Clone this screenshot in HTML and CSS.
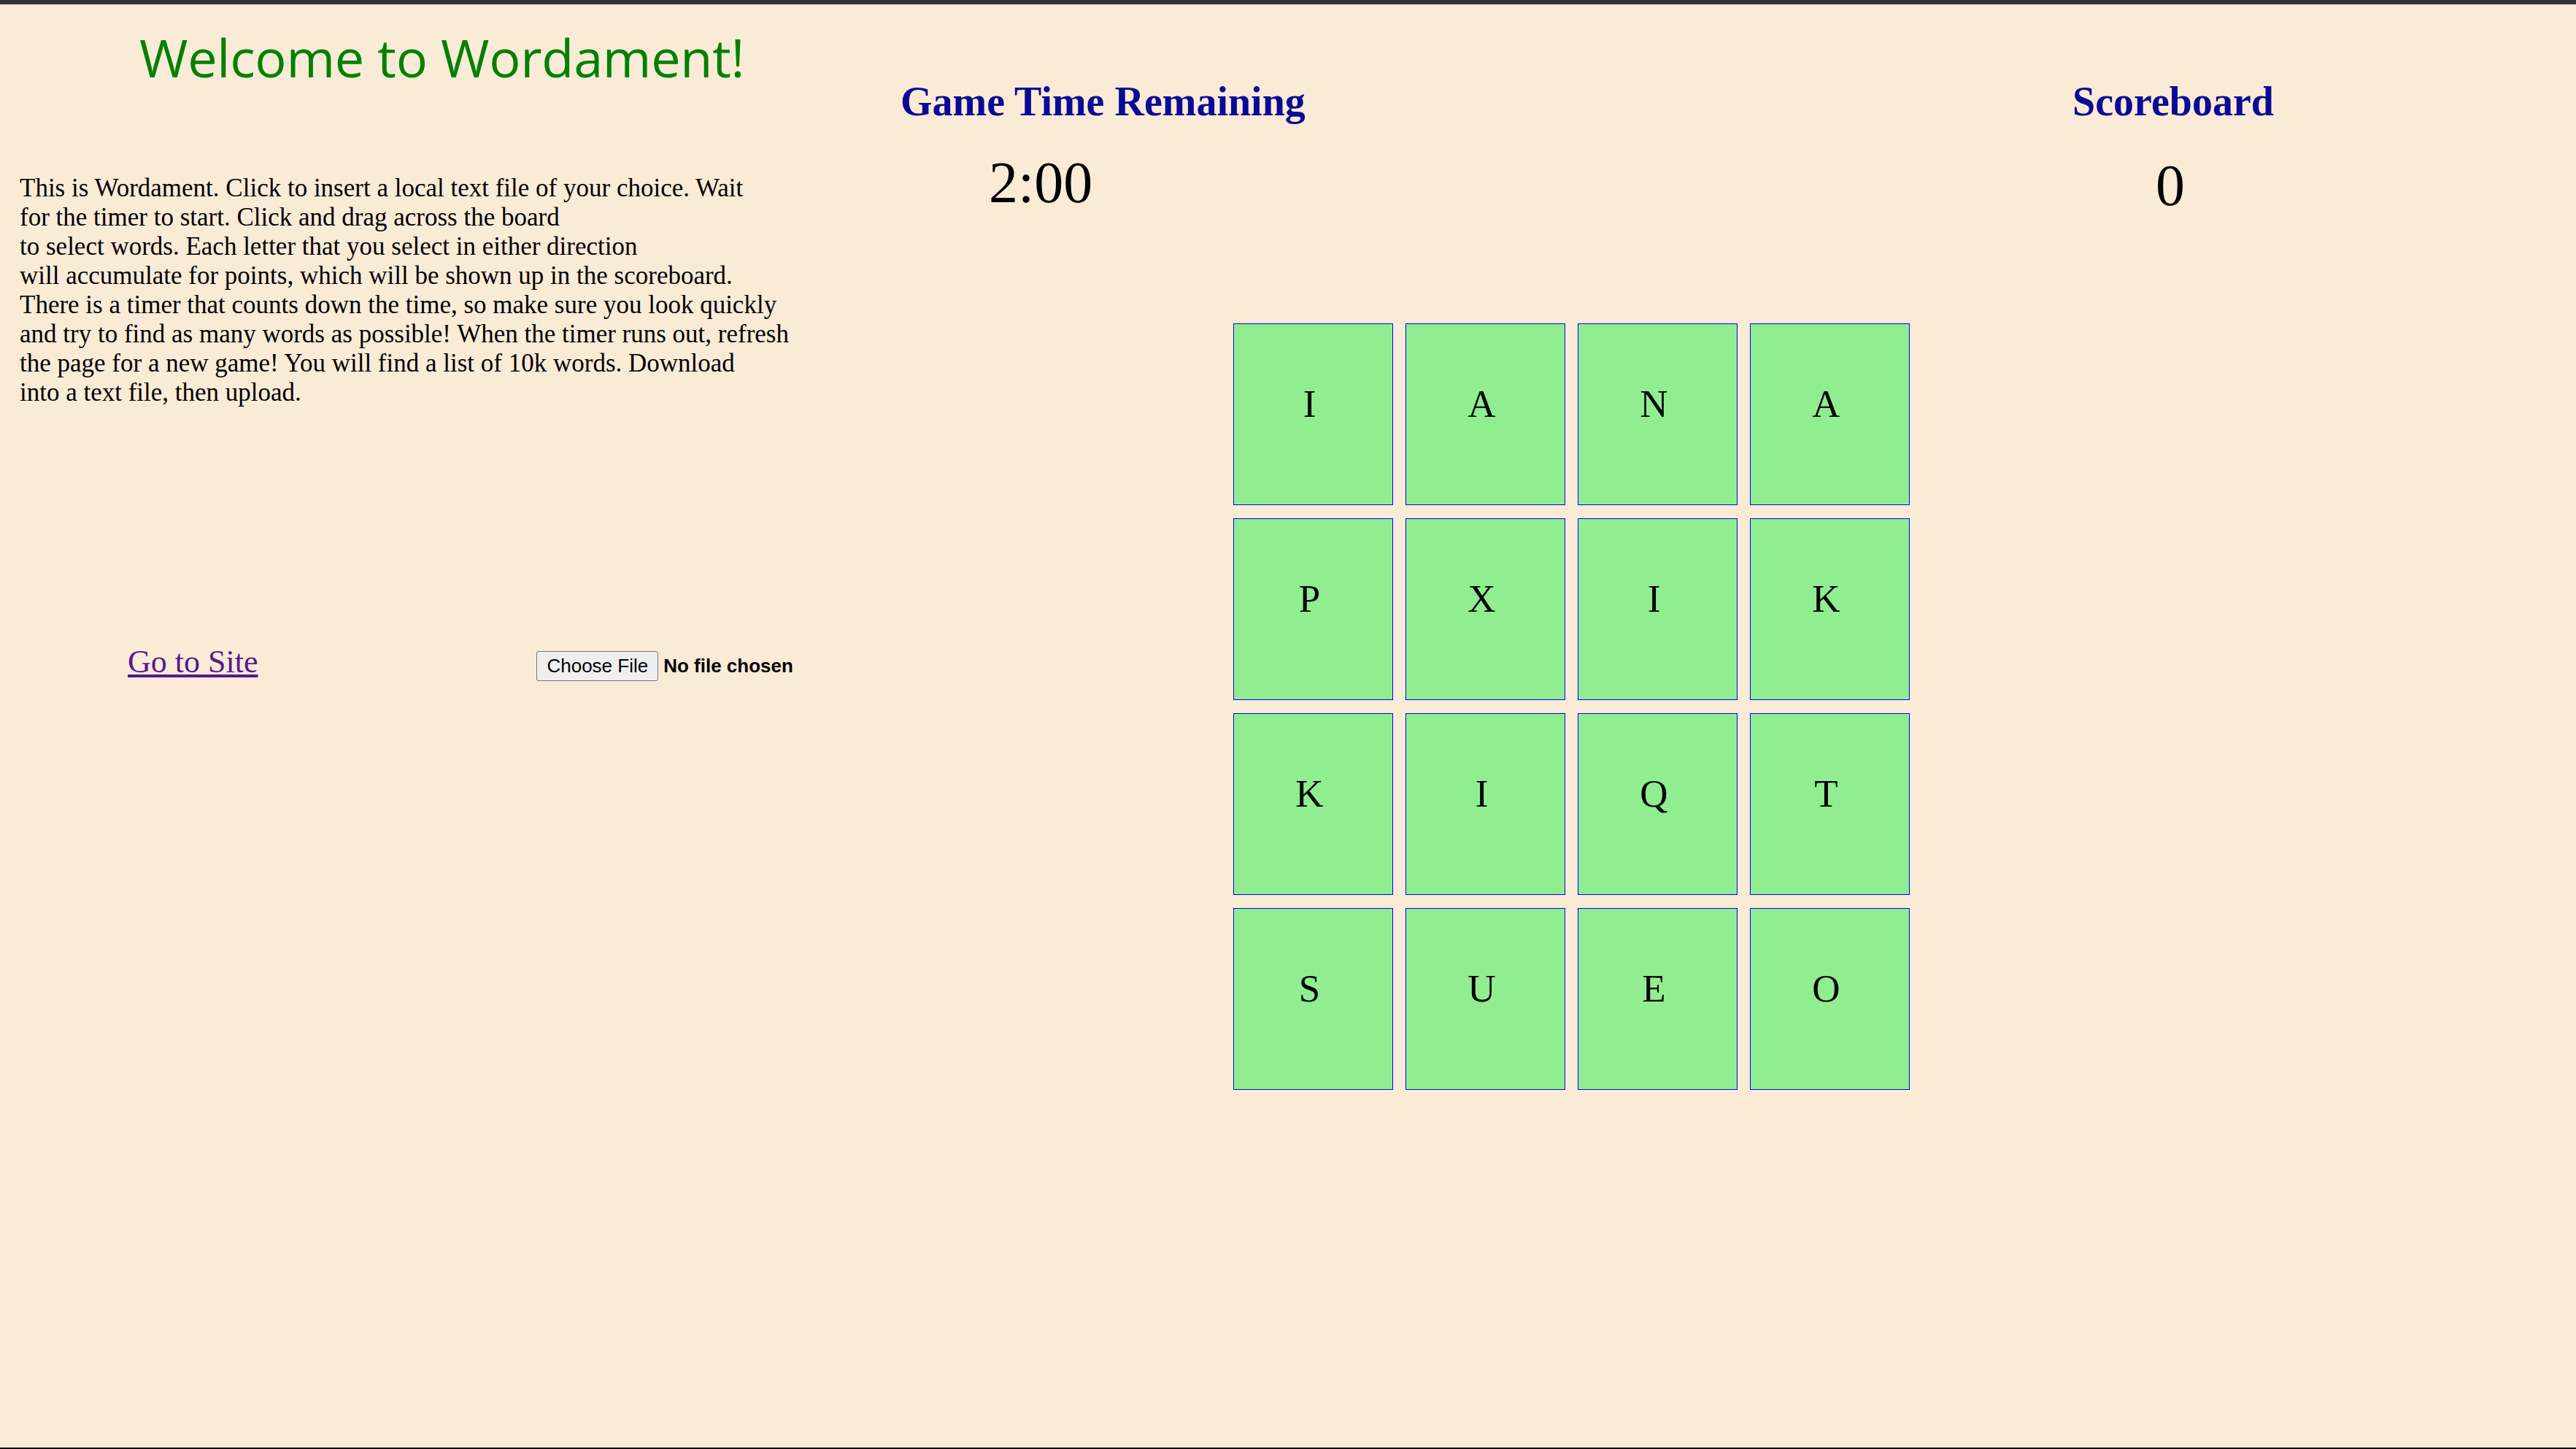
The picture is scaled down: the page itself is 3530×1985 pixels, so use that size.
FILE: index.html
```html
<!DOCTYPE html>
<html lang="en">
<head>
<meta charset="utf-8">
<title>Wordament</title>
<link rel="stylesheet" href="styles.css">
</head>
<body>
<main class="page">
  <section class="intro">
    <h1 class="title">Welcome to Wordament!</h1>
    <p class="rules">This is Wordament. Click to insert a local text file of your choice. Wait<br>for the timer to start. Click and drag across the board<br>to select words. Each letter that you select in either direction<br>will accumulate for points, which will be shown up in the scoreboard.<br>There is a timer that counts down the time, so make sure you look quickly<br>and try to find as many words as possible! When the timer runs out, refresh<br>the page for a new game! You will find a list of 10k words. Download<br>into a text file, then upload.</p>
    <div class="actions">
      <a class="site-link" href="#">Go to Site</a>
      <input class="file-input" type="file">
    </div>
  </section>
  <section class="game">
    <div class="stats">
      <div class="stat timer">
        <h2 class="stat-title">Game Time Remaining</h2>
        <div class="stat-value timer-value">2:00</div>
      </div>
      <div class="stat score">
        <h2 class="stat-title">Scoreboard</h2>
        <div class="stat-value score-value">0</div>
      </div>
    </div>
    <div class="board">
      <div class="tile">I</div><div class="tile">A</div><div class="tile">N</div><div class="tile">A</div>
      <div class="tile">P</div><div class="tile">X</div><div class="tile">I</div><div class="tile">K</div>
      <div class="tile">K</div><div class="tile">I</div><div class="tile">Q</div><div class="tile">T</div>
      <div class="tile">S</div><div class="tile">U</div><div class="tile">E</div><div class="tile">O</div>
    </div>
  </section>
</main>
</body>
</html>
```
FILE: styles.css
```css
html, body {
  margin: 0;
  padding: 0;
}

body {
  background: #faebd7;
  min-height: 100vh;
  box-sizing: border-box;
  border-top: 6px solid #323236;
  border-bottom: 2px solid #000;
  font-family: "Liberation Serif", "Times New Roman", serif;
  color: #000;
}

.page {
  display: flex;
}

.intro {
  width: 1130px;
  flex: none;
  padding-left: 27px;
  box-sizing: border-box;
}

.title {
  margin: 22px 0 0 164px;
  font-family: "Open Sans", sans-serif;
  font-weight: 400;
  font-size: 72px;
  letter-spacing: -0.3px;
  line-height: 100px;
  color: #008000;
  white-space: nowrap;
}

.rules {
  margin: 110px 0 0;
  font-size: 35px;
  line-height: 40px;
  white-space: nowrap;
}

.actions {
  display: flex;
  align-items: baseline;
  margin-top: 323px;
  padding-left: 148px;
}

.site-link {
  flex: none;
  white-space: nowrap;
  font-size: 44px;
  color: #551a8b;
}

.file-input {
  flex: none;
  margin-left: 382px;
  font-family: "Liberation Sans", Arial, sans-serif;
  font-weight: 700;
  font-size: 26px;
  color: #000;
}

.file-input::file-selector-button {
  font-family: "Liberation Sans", Arial, sans-serif;
  font-weight: 400;
  font-size: 26px;
  padding: 4px 13px;
  margin-right: 7px;
  border: 1px solid #767676;
  border-radius: 3px;
  background: #efefef;
  color: #000;
}

.game {
  flex: 1;
}

.stats {
  display: flex;
  align-items: flex-start;
  margin-top: 101px;
}

.stat-title {
  margin: 0;
  font-weight: 700;
  font-size: 56px;
  line-height: 64px;
  color: #0b0a95;
  white-space: nowrap;
}

.stat-value {
  font-size: 80px;
  line-height: 92px;
}

.timer {
  margin-left: 104px;
  width: 556px;
}

.timer-value {
  margin: 33px 0 0 121px;
}

.score {
  margin-left: 988px;
  width: 400px;
  text-align: center;
}

.score-value {
  margin-top: 37px;
  padding-right: 8px;
}

.board {
  display: grid;
  grid-template-columns: repeat(4, 219px);
  grid-auto-rows: 249px;
  column-gap: 17px;
  row-gap: 18px;
  margin: 143px 0 0 560px;
}

.tile {
  background: #90ee90;
  border: 1px solid #0000ff;
  box-sizing: border-box;
  text-align: center;
  font-size: 53px;
  line-height: 61px;
  padding: 79px 10px 0 0;
}
```
